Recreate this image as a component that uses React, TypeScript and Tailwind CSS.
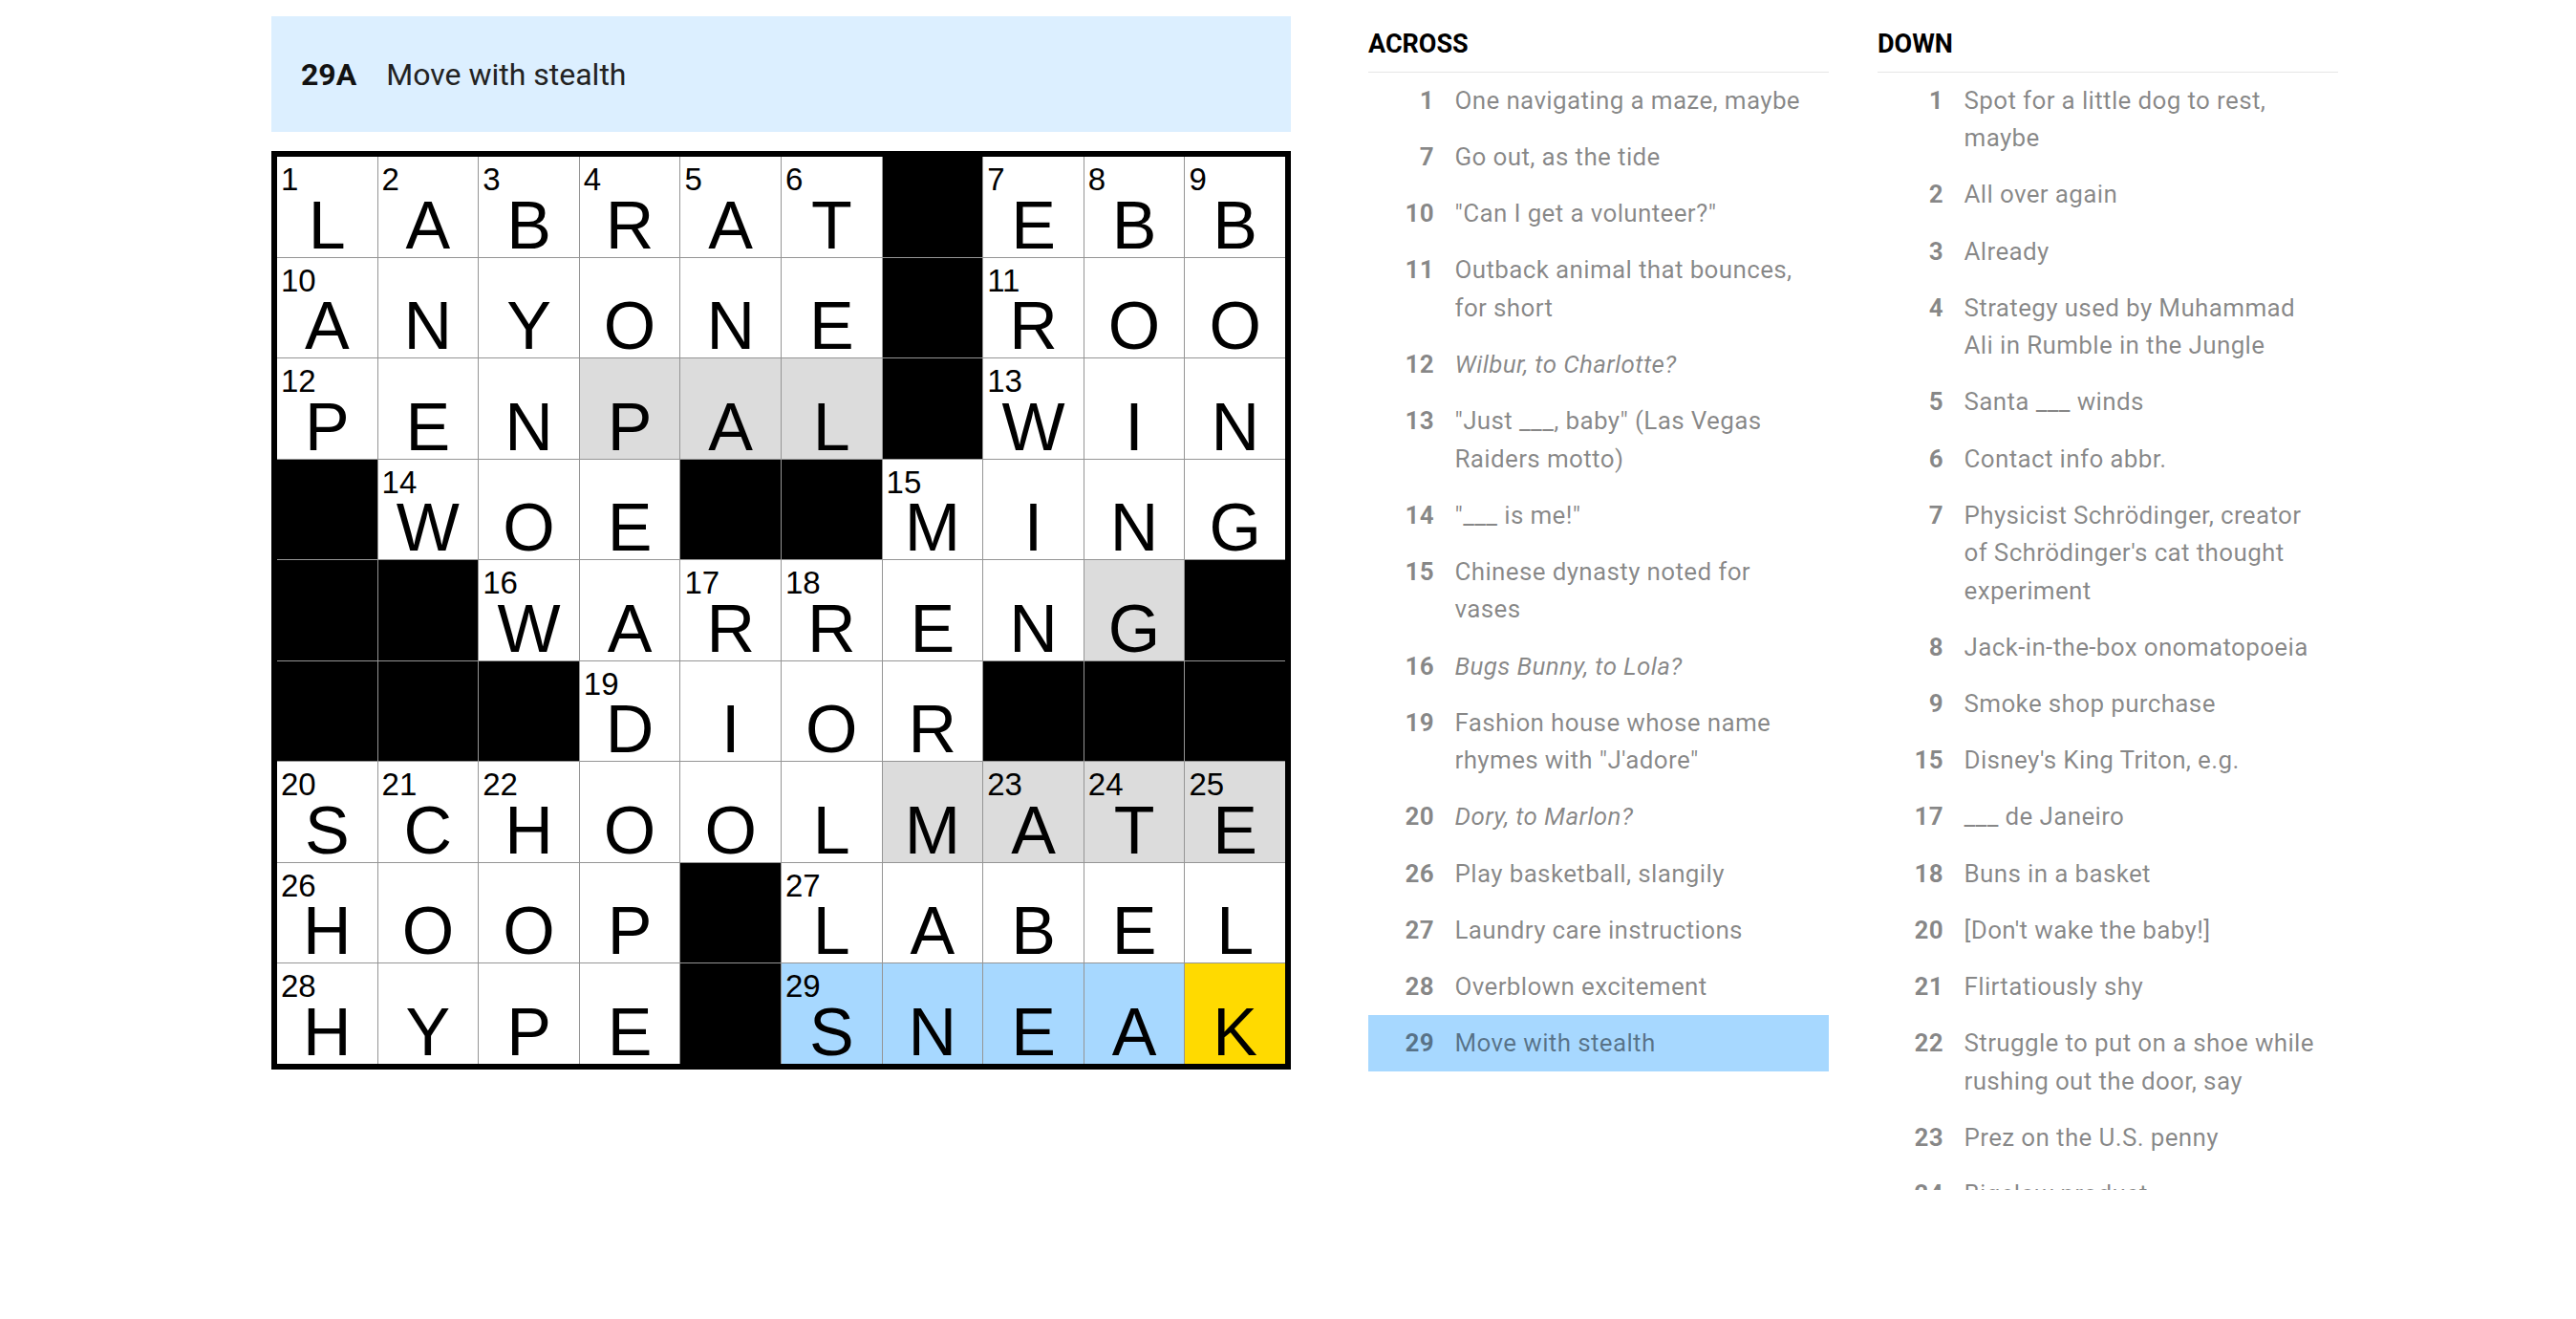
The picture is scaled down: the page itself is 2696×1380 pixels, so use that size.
import React from 'react';

type Clue = { num: number; text: string; italic?: boolean };

// 10 x 9 solved grid, '#' is a block
const ROWS = [
  'LABRAT#EBB',
  'ANYONE#ROO',
  'PENPAL#WIN',
  '#WOE##MING',
  '##WARRENG#',
  '###DIOR###',
  'SCHOOLMATE',
  'HOOP#LABEL',
  'HYPE#SNEAK',
];

const SHADED = new Set(['2-3', '2-4', '2-5', '4-8', '6-6', '6-7', '6-8', '6-9']);
const ACTIVE_WORD = new Set(['8-5', '8-6', '8-7', '8-8']);
const ACTIVE_CELL = '8-9';

const ACROSS: Clue[] = [
  { num: 1, text: 'One navigating a maze, maybe' },
  { num: 7, text: 'Go out, as the tide' },
  { num: 10, text: '"Can I get a volunteer?"' },
  { num: 11, text: 'Outback animal that bounces, for short' },
  { num: 12, text: 'Wilbur, to Charlotte?', italic: true },
  { num: 13, text: '"Just ___, baby" (Las Vegas Raiders motto)' },
  { num: 14, text: '"___ is me!"' },
  { num: 15, text: 'Chinese dynasty noted for vases' },
  { num: 16, text: 'Bugs Bunny, to Lola?', italic: true },
  { num: 19, text: 'Fashion house whose name rhymes with "J\'adore"' },
  { num: 20, text: 'Dory, to Marlon?', italic: true },
  { num: 26, text: 'Play basketball, slangily' },
  { num: 27, text: 'Laundry care instructions' },
  { num: 28, text: 'Overblown excitement' },
  { num: 29, text: 'Move with stealth' },
];

const DOWN: Clue[] = [
  { num: 1, text: 'Spot for a little dog to rest, maybe' },
  { num: 2, text: 'All over again' },
  { num: 3, text: 'Already' },
  { num: 4, text: 'Strategy used by Muhammad Ali in Rumble in the Jungle' },
  { num: 5, text: 'Santa ___ winds' },
  { num: 6, text: 'Contact info abbr.' },
  { num: 7, text: "Physicist Schrödinger, creator of Schrödinger's cat thought experiment" },
  { num: 8, text: 'Jack-in-the-box onomatopoeia' },
  { num: 9, text: 'Smoke shop purchase' },
  { num: 15, text: "Disney's King Triton, e.g." },
  { num: 17, text: '___ de Janeiro' },
  { num: 18, text: 'Buns in a basket' },
  { num: 20, text: "[Don't wake the baby!]" },
  { num: 21, text: 'Flirtatiously shy' },
  { num: 22, text: 'Struggle to put on a shoe while rushing out the door, say' },
  { num: 23, text: 'Prez on the U.S. penny' },
  { num: 24, text: 'Bigelow product' },
];

const isOpen = (r: number, c: number) =>
  r >= 0 && r < ROWS.length && c >= 0 && c < 10 && ROWS[r][c] !== '#';

// standard numbering: a cell gets a number when it starts an across or down entry
const buildNumbers = () => {
  const nums: Record<string, number> = {};
  let n = 1;
  ROWS.forEach((row, r) => {
    row.split('').forEach((_, c) => {
      if (!isOpen(r, c)) return;
      const across = !isOpen(r, c - 1) && isOpen(r, c + 1);
      const down = !isOpen(r - 1, c) && isOpen(r + 1, c);
      if (across || down) nums[`${r}-${c}`] = n++;
    });
  });
  return nums;
};

const NUMBERS = buildNumbers();

const Cell = ({ r, c, ch }: { r: number; c: number; ch: string }) => {
  const key = `${r}-${c}`;
  if (ch === '#') return <div className="bg-black" />;

  let bg = 'bg-white';
  if (SHADED.has(key)) bg = 'bg-[#dcdcdc]';
  if (ACTIVE_WORD.has(key)) bg = 'bg-[#a7d8ff]';
  if (key === ACTIVE_CELL) bg = 'bg-[#ffda00]';

  return (
    <div className={`relative flex items-end justify-center ${bg}`}>
      {NUMBERS[key] && (
        <span className="absolute left-[4px] top-[7px] text-[33px] leading-none">{NUMBERS[key]}</span>
      )}
      <span className="translate-y-[2px] text-[70px] leading-none">{ch}</span>
    </div>
  );
};

const ClueList = ({ title, clues, active }: { title: string; clues: Clue[]; active?: number }) => (
  <section className="w-[482px]">
    <h3 className="mt-[16px] border-b border-[#e6e6e6] pb-[16px] text-[27px] font-bold leading-[26px] text-black">
      {title}
    </h3>
    <ol className="h-[1169px] overflow-hidden">
      {clues.map((clue) => (
        <li
          key={clue.num}
          className={`flex py-[9.9px] text-[26px] leading-[39.4px] tracking-[0.35px] text-[rgba(0,0,0,0.47)] ${
            clue.num === active ? 'bg-[#a7d8ff]' : ''
          }`}
        >
          <span className="w-[69px] shrink-0 text-right font-bold">{clue.num}</span>
          <span className={`ml-[21.5px] w-[372px] ${clue.italic ? 'italic' : ''}`}>{clue.text}</span>
        </li>
      ))}
    </ol>
  </section>
);

export default function App() {
  return (
    <div className="min-h-screen bg-white font-['Roboto',sans-serif] text-[#121212]">
      <div className="flex items-start pl-[284px] pt-[17px]">
        <div className="w-[1067px] shrink-0">
          <div className="flex h-[121px] items-center bg-[#dcefff] pl-[31px] text-[32px]">
            <span className="font-bold">29A</span>
            <span className="ml-[31px] text-[#222]">Move with stealth</span>
          </div>

          <div className="mt-[20px] grid auto-rows-[104.5px] grid-cols-10 gap-px border-[6px] border-black bg-[#959595] font-['Liberation_Sans',Arial,sans-serif] text-black">
            {ROWS.map((row, r) => row.split('').map((ch, c) => <Cell key={`${r}-${c}`} r={r} c={c} ch={ch} />))}
          </div>
        </div>

        <div className="ml-[81px] flex gap-[51px]">
          <ClueList title="ACROSS" clues={ACROSS} active={29} />
          <ClueList title="DOWN" clues={DOWN} />
        </div>
      </div>
    </div>
  );
}
